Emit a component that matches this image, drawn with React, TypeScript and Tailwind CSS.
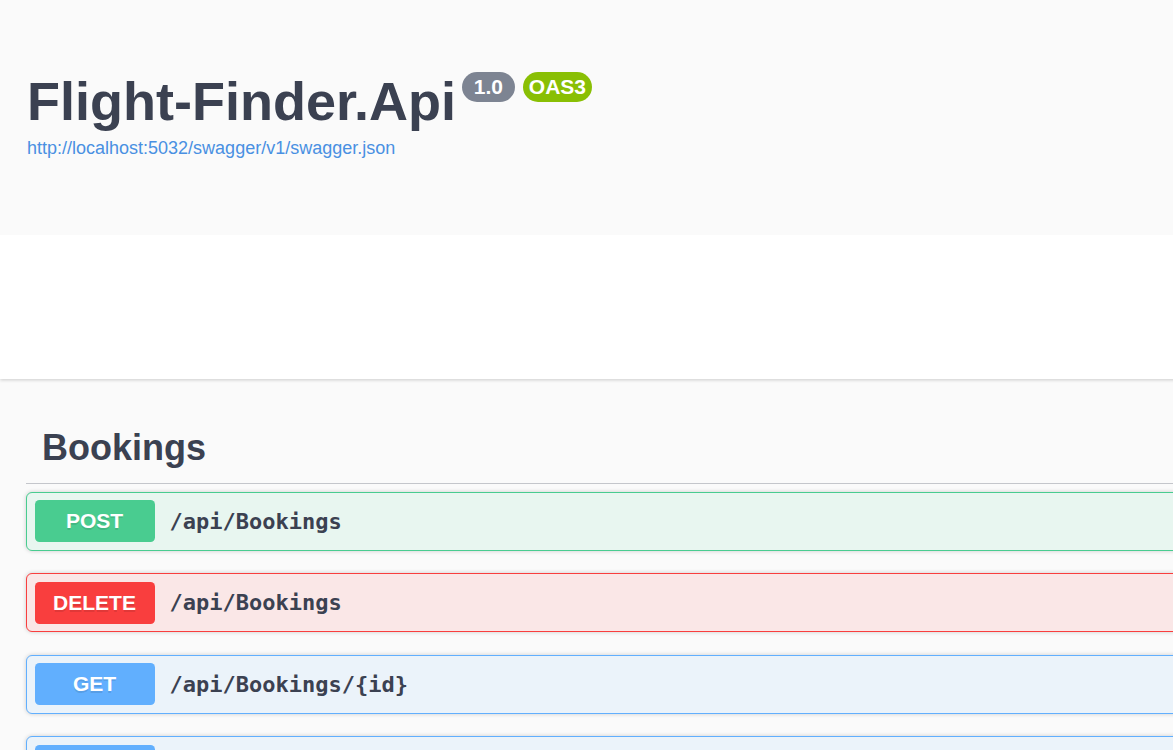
import React from "react";

type Op = { method: string; path: string; badge: string; bg: string; border: string };

const ops: Op[] = [
  { method: "POST", path: "/api/Bookings", badge: "bg-[#49cc90]", bg: "bg-[#e8f6f0]", border: "border-[#49cc90]" },
  { method: "DELETE", path: "/api/Bookings", badge: "bg-[#f93e3e]", bg: "bg-[#fae7e7]", border: "border-[#f93e3e]" },
  { method: "GET", path: "/api/Bookings/{id}", badge: "bg-[#61affe]", bg: "bg-[#ebf3fa]", border: "border-[#61affe]" },
  { method: "GET", path: "/api/Bookings", badge: "bg-[#61affe]", bg: "bg-[#ebf3fa]", border: "border-[#61affe]" },
];

export default function App() {
  return (
    <div className="h-[750px] w-full overflow-hidden bg-[#fafafa] font-['Liberation_Sans',Arial,sans-serif] text-[#3b4151]">
      <div className="w-[1600px]">
        {/* Info */}
        <div className="h-[235px] bg-[#fafafa] pl-[27px] pt-[70px]">
          <div className="flex items-start">
            <h2 className="m-0 text-[54px] font-bold leading-[62px] text-[#3b4151]">Flight-Finder.Api</h2>
            <span className="ml-[6px] mt-[2px] inline-block rounded-full bg-[#7d8492] px-[6px] py-[3px]">
              <pre className="m-0 p-0 font-['Liberation_Sans',Arial,sans-serif] text-[21px] font-bold leading-[24px] text-white">{" 1.0 "}</pre>
            </span>
            <span className="ml-[8px] mt-[2px] inline-block rounded-full bg-[#89bf04] px-[6px] py-[3px]">
              <pre className="m-0 p-0 font-['Liberation_Sans',Arial,sans-serif] text-[21px] font-bold leading-[24px] text-white">OAS3</pre>
            </span>
          </div>
          <a className="mt-[3px] block text-[18px] leading-[27px] text-[#4990e2]">http://localhost:5032/swagger/v1/swagger.json</a>
        </div>

        {/* Scheme container */}
        <div className="relative h-[144px] bg-white shadow-[0_1.5px_3px_0_rgba(0,0,0,0.15)]" />

        {/* Operations */}
        <div className="pl-[26px] pt-[33px]">
          <h3 className="m-0 border-b border-[#c4c6cb] py-[15px] pl-[16px] pr-[30px] text-[36px] font-bold leading-[41px] text-[#3b4151]">
            Bookings
          </h3>
          <div className="pt-[7.5px]">
            {ops.map((op, i) => (
              <div
                key={i}
                className={`mb-[22.5px] rounded-[6px] border ${op.border} ${op.bg} shadow-[0_0_4.5px_rgba(0,0,0,0.19)]`}
              >
                <div className="flex items-center p-[7.5px]">
                  <span
                    className={`inline-block w-[120px] rounded-[4.5px] ${op.badge} py-[9px] text-center text-[21px] font-bold leading-[24px] text-white [text-shadow:0_1.5px_0_rgba(0,0,0,0.1)]`}
                  >
                    {op.method}
                  </span>
                  <span className="px-[15px] font-['DejaVu_Sans_Mono',monospace] text-[22px] font-bold text-[#3b4151]">
                    {op.path}
                  </span>
                </div>
              </div>
            ))}
          </div>
        </div>
      </div>
    </div>
  );
}
